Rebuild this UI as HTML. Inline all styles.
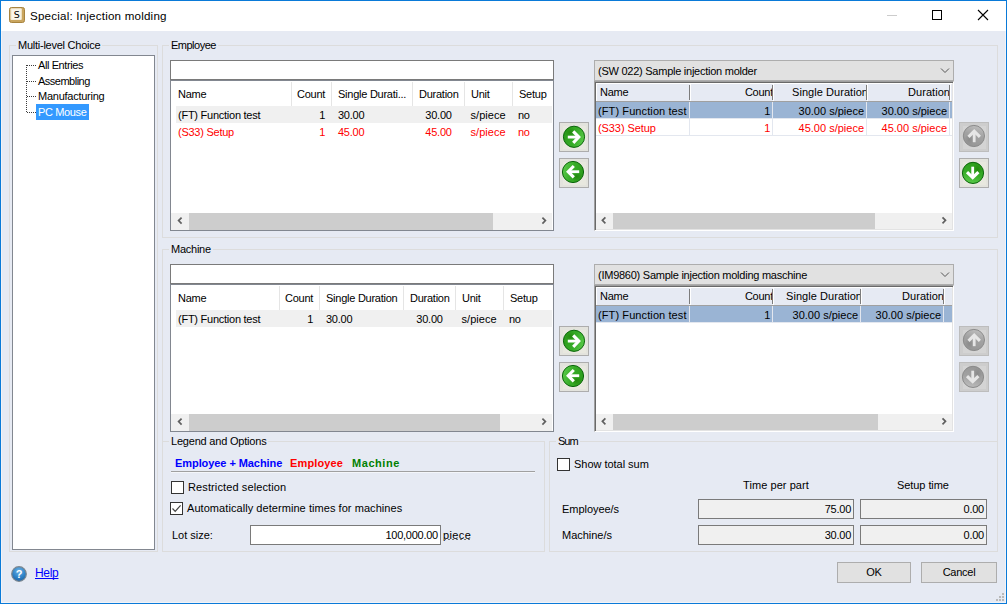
<!DOCTYPE html>
<html>
<head>
<meta charset="utf-8">
<title>Special: Injection molding</title>
<style>
html,body{margin:0;padding:0;}
body{width:1007px;height:604px;position:relative;overflow:hidden;background:#e6eaf3;
  font-family:"Liberation Sans",sans-serif;font-size:11px;color:#000;letter-spacing:-0.25px;}
.a{position:absolute;}
.t{position:absolute;white-space:nowrap;line-height:13px;height:13px;}
.win{left:0;top:0;width:1007px;height:604px;box-sizing:border-box;border:1px solid #0a7ad8;box-shadow:inset 0 0 0 1px #f2f3f7;}
.titlebar{left:1px;top:1px;width:1005px;height:30px;background:#fff;}
.title{left:30px;top:8px;letter-spacing:0.2px;font-size:11.6px;line-height:15px;height:15px;}
.gb{position:absolute;box-sizing:border-box;border:1px solid #dcdcdc;}
.gbl{position:absolute;background:#e6eaf3;padding:0 2px 0 2px;white-space:nowrap;line-height:13px;height:13px;}
.tree{left:12px;top:55px;width:143px;height:495px;box-sizing:border-box;border:1px solid #828790;background:#fff;}
.sel{background:#3399ff;}
.edit{position:absolute;box-sizing:border-box;border:1px solid #7a7a7a;background:#fff;}
.lv{position:absolute;box-sizing:border-box;border:1px solid #828790;background:#fff;overflow:hidden;}
.hsep{position:absolute;width:1px;background:#e5e5e5;}
.rowbg{position:absolute;background:#f0f0f0;}
.red{color:#ff0000;}
.sb{position:absolute;height:17px;background:#f0f0f0;}
.thumb{position:absolute;top:0;height:17px;background:#cdcdcd;}
.btn{position:absolute;box-sizing:border-box;border:1px solid #adadad;background:#e1e1e1;}
.ibtn{position:absolute;box-sizing:border-box;border:1px solid #adadad;background:#e3e3dd;width:30px;height:30px;}
.combo{position:absolute;box-sizing:border-box;border:1px solid #adadad;background:#e1e1e1;}
.grid{position:absolute;box-sizing:border-box;background:#fff;border:1px solid;border-color:#a0a0a0 #fff #fff #a0a0a0;box-shadow:inset 1px 1px 0 #696969,inset -1px -1px 0 #e3e3e3;overflow:hidden;}
.ghead{position:absolute;left:0;top:0;height:18px;background:#e6eaf3;}
.gsep{position:absolute;width:1px;background:#7c7c7c;}
.gsel{position:absolute;background:#9ab4d4;}
.gline{position:absolute;background:#e3e7ef;}
.ro{position:absolute;box-sizing:border-box;border:1px solid #7a7a7a;background:#f0f0f0;}
.cb{position:absolute;box-sizing:border-box;width:13px;height:13px;border:1px solid #333;background:#fff;}
</style>
</head>
<body>
<div class="a win"></div>
<div class="a titlebar"></div>

<!-- app icon -->
<svg class="a" style="left:9px;top:7px" width="16" height="16" viewBox="0 0 16 16">
  <rect x="0.5" y="0.5" width="15" height="15" rx="2" ry="2" fill="#c9a55f" stroke="#a8843f" stroke-width="1"/>
  <rect x="1.5" y="1.2" width="11.3" height="11.8" rx="1" ry="1" fill="#f4ecdb"/>
  <rect x="3" y="2.5" width="8.5" height="9.5" fill="#fbf6ea"/>
  <text x="7.6" y="11" font-family="DejaVu Sans, Liberation Sans, sans-serif" font-size="9.5" text-anchor="middle" fill="#000">S</text>
</svg>
<div class="t title">Special: Injection molding</div>

<!-- window controls -->
<svg class="a" style="left:880px;top:1px" width="126" height="30" viewBox="0 0 126 30">
  <line x1="7" y1="14.5" x2="17" y2="14.5" stroke="#cccccc" stroke-width="1"/>
  <rect x="52.5" y="9.5" width="9" height="9" fill="none" stroke="#000" stroke-width="1"/>
  <path d="M98 9 L108 19 M108 9 L98 19" stroke="#000" stroke-width="1.1" fill="none"/>
</svg>

<!-- Multi-level Choice -->
<div class="gb" style="left:9px;top:45px;width:149px;height:507px"></div>
<div class="gbl" style="left:16px;top:39px">Multi-level Choice</div>
<div class="a tree"></div>
<svg class="a" style="left:20px;top:56px" width="20" height="64" viewBox="0 0 20 64">
  <g stroke="#3c3c3c" stroke-width="1" stroke-dasharray="1 1" fill="none">
    <line x1="6.5" y1="9" x2="6.5" y2="57"/>
    <line x1="7" y1="9.5" x2="16" y2="9.5"/>
    <line x1="7" y1="25.5" x2="16" y2="25.5"/>
    <line x1="7" y1="40.5" x2="16" y2="40.5"/>
    <line x1="7" y1="56.5" x2="16" y2="56.5"/>
  </g>
</svg>
<div class="a sel" style="left:36px;top:104px;width:53px;height:16px"></div>
<div class="t" style="left:38px;top:59px;letter-spacing:-0.4px">All Entries</div>
<div class="t" style="left:38px;top:75px;letter-spacing:-0.5px">Assembling</div>
<div class="t" style="left:38px;top:90px">Manufacturing</div>
<div class="t" style="left:38px;top:106px;color:#fff;letter-spacing:-0.37px">PC Mouse</div>

<!-- group boxes -->
<div class="gb" style="left:162px;top:45px;width:836px;height:193px"></div>
<div class="gbl" style="left:169px;top:39px;letter-spacing:-0.5px">Employee</div>
<div class="gb" style="left:162px;top:249px;width:836px;height:194px;border-bottom:none"></div>
<div class="gbl" style="left:169px;top:243px">Machine</div>
<div class="gb" style="left:162px;top:441px;width:383px;height:111px"></div>
<div class="gbl" style="left:169px;top:435px;letter-spacing:-0.2px">Legend and Options</div>
<div class="gb" style="left:549px;top:441px;width:449px;height:111px"></div>
<div class="gbl" style="left:556px;top:435px;letter-spacing:-1px">Sum</div>

<svg width="0" height="0" style="position:absolute">
  <defs>
    <linearGradient id="gg" x1="0" y1="0.35" x2="1" y2="0.65">
      <stop offset="0" stop-color="#2c9c1b"/><stop offset="0.55" stop-color="#37ac28"/><stop offset="1" stop-color="#5bcb4a"/>
    </linearGradient>
    <radialGradient id="gd" cx="50%" cy="50%" r="50%">
      <stop offset="0" stop-color="#1f8208" stop-opacity="0.75"/><stop offset="1" stop-color="#1f8208" stop-opacity="0"/>
    </radialGradient>
    <linearGradient id="yg" x1="0" y1="0.35" x2="1" y2="0.65">
      <stop offset="0" stop-color="#969696"/><stop offset="0.55" stop-color="#a2a2a2"/><stop offset="1" stop-color="#bdbdbd"/>
    </linearGradient>
    <radialGradient id="yd" cx="50%" cy="50%" r="50%">
      <stop offset="0" stop-color="#808080" stop-opacity="0.6"/><stop offset="1" stop-color="#808080" stop-opacity="0"/>
    </radialGradient>
    <g id="arrow" fill="none">
      <path d="M-6.2 0.3 H3.6" stroke-width="2.8"/>
      <path d="M-0.8 -5.4 L4.8 0.3 L-0.8 6" stroke-width="3.1" stroke-linejoin="miter"/>
    </g>
    <g id="gico">
      <circle r="10.6" fill="url(#gg)" stroke="#0b660b" stroke-width="1"/>
      <ellipse cx="-3.5" cy="-4.5" rx="6" ry="5" fill="url(#gd)"/>
      <use href="#arrow" stroke="#fff"/>
    </g>
    <g id="yico">
      <circle r="10.6" fill="url(#yg)" stroke="#8b8b8b" stroke-width="1"/>
      <ellipse cx="-3.5" cy="-4.5" rx="6" ry="5" fill="url(#yd)"/>
      <use href="#arrow" stroke="#e6e6e6"/>
    </g>
  </defs>
</svg>
<!-- ===== EMPLOYEE left ===== -->
<div class="edit" style="left:170px;top:60px;width:384px;height:20px"></div>
<div class="lv" style="left:170px;top:80px;width:384px;height:151px"></div>
<div class="hsep" style="left:291px;top:82px;height:24px"></div>
<div class="hsep" style="left:331px;top:82px;height:24px"></div>
<div class="hsep" style="left:412px;top:82px;height:24px"></div>
<div class="hsep" style="left:464px;top:82px;height:24px"></div>
<div class="hsep" style="left:512px;top:82px;height:24px"></div>
<div class="rowbg" style="left:176px;top:106px;width:376px;height:17px"></div>
<div class="t" style="left:178px;top:88px">Name</div>
<div class="t" style="left:297px;top:88px">Count</div>
<div class="t" style="left:338px;top:88px">Single Durati...</div>
<div class="t" style="left:419px;top:88px">Duration</div>
<div class="t" style="left:471px;top:88px">Unit</div>
<div class="t" style="left:519px;top:88px">Setup</div>
<div class="t" style="left:178px;top:109px">(FT) Function test</div>
<div class="t" style="left:291px;top:109px;width:34px;text-align:right">1</div>
<div class="t" style="left:338px;top:109px">30.00</div>
<div class="t" style="left:413px;top:109px;width:51px;text-align:center">30.00</div>
<div class="t" style="left:470.5px;top:109px;letter-spacing:0.05px">s/piece</div>
<div class="t" style="left:518px;top:109px">no</div>
<div class="t red" style="left:178px;top:126px">(S33) Setup</div>
<div class="t red" style="left:291px;top:126px;width:34px;text-align:right">1</div>
<div class="t red" style="left:338px;top:126px">45.00</div>
<div class="t red" style="left:413px;top:126px;width:51px;text-align:center">45.00</div>
<div class="t red" style="left:470.5px;top:126px;letter-spacing:0.05px">s/piece</div>
<div class="t red" style="left:518px;top:126px">no</div>
<div class="sb" style="left:171px;top:213px;width:381px"><div class="thumb" style="left:18px;width:304px"></div>
<svg class="a" style="left:0;top:0" width="381" height="17"><path d="M10.6 4.6 L7.6 7.6 L10.6 10.6" fill="none" stroke="#606060" stroke-width="1.7"/><path d="M371.4 4.6 L374.4 7.6 L371.4 10.6" fill="none" stroke="#606060" stroke-width="1.7"/></svg></div>

<!-- arrow buttons -->
<div class="ibtn" style="left:559px;top:122px"><svg class="a" style="left:0;top:0" width="28" height="28" viewBox="0 0 28 28"><rect x="3" y="3" width="23" height="23" fill="#e8e8df"/><use href="#gico" transform="translate(14.0 13.8) rotate(0)"/></svg></div>
<div class="ibtn" style="left:559px;top:158px"><svg class="a" style="left:0;top:0" width="28" height="28" viewBox="0 0 28 28"><rect x="3" y="3" width="23" height="23" fill="#e8e8df"/><use href="#gico" transform="translate(13.0 13.0) rotate(180)"/></svg></div>

<!-- ===== EMPLOYEE right ===== -->
<div class="combo" style="left:594px;top:60px;width:360px;height:21px"></div>
<div class="t" style="left:598px;top:65px">(SW 022) Sample injection molder</div>
<svg class="a" style="left:939px;top:66px" width="12" height="9" viewBox="0 0 12 9"><path d="M2 2.5 L6 6.5 L10 2.5" fill="none" stroke="#555" stroke-width="1"/></svg>
<div class="grid" style="left:594px;top:81px;width:360px;height:150px"></div>
<div class="a" style="left:596px;top:83px;width:356px;height:18px;background:#e6eaf3;border-top:1px solid #fff;border-left:1px solid #fff;box-sizing:border-box"></div>
<div class="gsep" style="left:689px;top:85px;height:15px"></div><div class="a" style="left:690px;top:84px;width:1px;height:17px;background:#fff"></div>
<div class="gsep" style="left:772px;top:85px;height:15px"></div><div class="a" style="left:773px;top:84px;width:1px;height:17px;background:#fff"></div>
<div class="gsep" style="left:866px;top:85px;height:15px"></div><div class="a" style="left:867px;top:84px;width:1px;height:17px;background:#fff"></div>
<div class="gsep" style="left:949px;top:85px;height:15px"></div><div class="a" style="left:950px;top:84px;width:1px;height:17px;background:#fff"></div>
<div class="a" style="left:596px;top:101px;width:356px;height:1px;background:#a0a0a0"></div>
<div class="gsel" style="left:596px;top:102px;width:356px;height:16px"></div>
<div class="a" style="left:689px;top:102px;width:1px;height:34px;background:#e3e7ef"></div>
<div class="a" style="left:772px;top:102px;width:1px;height:34px;background:#e3e7ef"></div>
<div class="a" style="left:866px;top:102px;width:1px;height:34px;background:#e3e7ef"></div>
<div class="a" style="left:949px;top:102px;width:1px;height:34px;background:#e3e7ef"></div>
<div class="gline" style="left:596px;top:118px;width:356px;height:1px"></div>
<div class="gline" style="left:596px;top:135px;width:356px;height:1px"></div>
<div class="t" style="left:600px;top:86px">Name</div>
<div class="t" style="left:690px;top:86px;width:82px;text-align:right;overflow:hidden"><span style="position:relative;left:1px">Count</span></div>
<div class="t" style="left:773px;top:86px;width:93px;text-align:right;overflow:hidden;letter-spacing:0.05px"><span style="position:relative;left:2px">Single Duration</span></div>
<div class="t" style="left:867px;top:86px;width:82px;text-align:right;overflow:hidden;letter-spacing:0.05px"><span style="position:relative;left:1px">Duration</span></div>
<div class="t" style="left:598px;top:105px;letter-spacing:0.1px">(FT) Function test</div>
<div class="t" style="left:690px;top:105px;width:80px;text-align:right">1</div>
<div class="t" style="left:773px;top:105px;width:91px;text-align:right;letter-spacing:0">30.00 s/piece</div>
<div class="t" style="left:867px;top:105px;width:80px;text-align:right;letter-spacing:0">30.00 s/piece</div>
<div class="t red" style="left:598px;top:122px;letter-spacing:-0.09px">(S33) Setup</div>
<div class="t red" style="left:690px;top:122px;width:80px;text-align:right">1</div>
<div class="t red" style="left:773px;top:122px;width:91px;text-align:right;letter-spacing:0">45.00 s/piece</div>
<div class="t red" style="left:867px;top:122px;width:80px;text-align:right;letter-spacing:0">45.00 s/piece</div>
<div class="sb" style="left:596px;top:213px;width:356px;height:16px"><div class="thumb" style="left:17px;width:262px;height:16px"></div>
<svg class="a" style="left:0;top:0" width="356" height="16"><path d="M9.4 4.3 L6.4 7.3 L9.4 10.3" fill="none" stroke="#606060" stroke-width="1.7"/><path d="M346.5 4.3 L349.5 7.3 L346.5 10.3" fill="none" stroke="#606060" stroke-width="1.7"/></svg></div>

<!-- up/down -->
<div class="ibtn" style="left:959px;top:122px;background:#cdcdcd;border-color:#bdbdbd"><svg class="a" style="left:0;top:0" width="28" height="28" viewBox="0 0 28 28"><rect x="3" y="3" width="23" height="23" fill="#d4d4d4"/><use href="#yico" transform="translate(13.9 13.0) rotate(-90)"/></svg></div>
<div class="ibtn" style="left:959px;top:158px"><svg class="a" style="left:0;top:0" width="28" height="28" viewBox="0 0 28 28"><rect x="3" y="3" width="23" height="23" fill="#e8e8df"/><use href="#gico" transform="translate(13.0 13.9) rotate(90)"/></svg></div>

<!-- ===== MACHINE left ===== -->
<div class="edit" style="left:170px;top:264px;width:384px;height:20px"></div>
<div class="lv" style="left:170px;top:284px;width:384px;height:148px"></div>
<div class="hsep" style="left:279px;top:286px;height:24px"></div>
<div class="hsep" style="left:319px;top:286px;height:24px"></div>
<div class="hsep" style="left:403px;top:286px;height:24px"></div>
<div class="hsep" style="left:455px;top:286px;height:24px"></div>
<div class="hsep" style="left:503px;top:286px;height:24px"></div>
<div class="rowbg" style="left:176px;top:310px;width:376px;height:17px"></div>
<div class="t" style="left:178px;top:292px">Name</div>
<div class="t" style="left:285px;top:292px">Count</div>
<div class="t" style="left:326px;top:292px">Single Duration</div>
<div class="t" style="left:410px;top:292px">Duration</div>
<div class="t" style="left:462px;top:292px">Unit</div>
<div class="t" style="left:510px;top:292px">Setup</div>
<div class="t" style="left:178px;top:313px">(FT) Function test</div>
<div class="t" style="left:279px;top:313px;width:34px;text-align:right">1</div>
<div class="t" style="left:326px;top:313px">30.00</div>
<div class="t" style="left:404px;top:313px;width:51px;text-align:center">30.00</div>
<div class="t" style="left:461.5px;top:313px;letter-spacing:0.05px">s/piece</div>
<div class="t" style="left:509px;top:313px">no</div>
<div class="sb" style="left:171px;top:414px;width:381px"><div class="thumb" style="left:18px;width:311px"></div>
<svg class="a" style="left:0;top:0" width="381" height="17"><path d="M10.6 4.6 L7.6 7.6 L10.6 10.6" fill="none" stroke="#606060" stroke-width="1.7"/><path d="M371.4 4.6 L374.4 7.6 L371.4 10.6" fill="none" stroke="#606060" stroke-width="1.7"/></svg></div>

<!-- arrow buttons -->
<div class="ibtn" style="left:559px;top:326px"><svg class="a" style="left:0;top:0" width="28" height="28" viewBox="0 0 28 28"><rect x="3" y="3" width="23" height="23" fill="#e8e8df"/><use href="#gico" transform="translate(14.0 13.8) rotate(0)"/></svg></div>
<div class="ibtn" style="left:559px;top:362px"><svg class="a" style="left:0;top:0" width="28" height="28" viewBox="0 0 28 28"><rect x="3" y="3" width="23" height="23" fill="#e8e8df"/><use href="#gico" transform="translate(13.0 13.0) rotate(180)"/></svg></div>

<!-- ===== MACHINE right ===== -->
<div class="combo" style="left:594px;top:264px;width:360px;height:21px"></div>
<div class="t" style="left:598px;top:269px">(IM9860) Sample injection molding maschine</div>
<svg class="a" style="left:939px;top:270px" width="12" height="9" viewBox="0 0 12 9"><path d="M2 2.5 L6 6.5 L10 2.5" fill="none" stroke="#555" stroke-width="1"/></svg>
<div class="grid" style="left:594px;top:285px;width:360px;height:147px"></div>
<div class="a" style="left:596px;top:287px;width:356px;height:18px;background:#e6eaf3;border-top:1px solid #fff;border-left:1px solid #fff;box-sizing:border-box"></div>
<div class="gsep" style="left:689px;top:289px;height:15px"></div><div class="a" style="left:690px;top:288px;width:1px;height:17px;background:#fff"></div>
<div class="gsep" style="left:772px;top:289px;height:15px"></div><div class="a" style="left:773px;top:288px;width:1px;height:17px;background:#fff"></div>
<div class="gsep" style="left:860px;top:289px;height:15px"></div><div class="a" style="left:861px;top:288px;width:1px;height:17px;background:#fff"></div>
<div class="gsep" style="left:943px;top:289px;height:15px"></div><div class="a" style="left:944px;top:288px;width:1px;height:17px;background:#fff"></div>
<div class="a" style="left:596px;top:305px;width:356px;height:1px;background:#a0a0a0"></div>
<div class="gsel" style="left:596px;top:306px;width:356px;height:16px"></div>
<div class="a" style="left:689px;top:306px;width:1px;height:17px;background:#e3e7ef"></div>
<div class="a" style="left:772px;top:306px;width:1px;height:17px;background:#e3e7ef"></div>
<div class="a" style="left:860px;top:306px;width:1px;height:17px;background:#e3e7ef"></div>
<div class="a" style="left:943px;top:306px;width:1px;height:17px;background:#e3e7ef"></div>
<div class="gline" style="left:596px;top:322px;width:356px;height:1px"></div>
<div class="t" style="left:600px;top:290px">Name</div>
<div class="t" style="left:690px;top:290px;width:82px;text-align:right;overflow:hidden"><span style="position:relative;left:1px">Count</span></div>
<div class="t" style="left:773px;top:290px;width:87px;text-align:right;overflow:hidden;letter-spacing:0.05px"><span style="position:relative;left:2px">Single Duration</span></div>
<div class="t" style="left:861px;top:290px;width:82px;text-align:right;overflow:hidden;letter-spacing:0.05px"><span style="position:relative;left:1px">Duration</span></div>
<div class="t" style="left:598px;top:309px;letter-spacing:0.1px">(FT) Function test</div>
<div class="t" style="left:690px;top:309px;width:80px;text-align:right">1</div>
<div class="t" style="left:773px;top:309px;width:85px;text-align:right;letter-spacing:0">30.00 s/piece</div>
<div class="t" style="left:861px;top:309px;width:80px;text-align:right;letter-spacing:0">30.00 s/piece</div>
<div class="sb" style="left:596px;top:414px;width:356px;height:16px"><div class="thumb" style="left:17px;width:265px;height:16px"></div>
<svg class="a" style="left:0;top:0" width="356" height="16"><path d="M9.4 4.3 L6.4 7.3 L9.4 10.3" fill="none" stroke="#606060" stroke-width="1.7"/><path d="M346.5 4.3 L349.5 7.3 L346.5 10.3" fill="none" stroke="#606060" stroke-width="1.7"/></svg></div>

<!-- up/down (both disabled) -->
<div class="ibtn" style="left:959px;top:326px;background:#cdcdcd;border-color:#bdbdbd"><svg class="a" style="left:0;top:0" width="28" height="28" viewBox="0 0 28 28"><rect x="3" y="3" width="23" height="23" fill="#d4d4d4"/><use href="#yico" transform="translate(13.9 13.0) rotate(-90)"/></svg></div>
<div class="ibtn" style="left:959px;top:362px;background:#cdcdcd;border-color:#bdbdbd"><svg class="a" style="left:0;top:0" width="28" height="28" viewBox="0 0 28 28"><rect x="3" y="3" width="23" height="23" fill="#d4d4d4"/><use href="#yico" transform="translate(13.0 13.9) rotate(90)"/></svg></div>

<!-- ===== LEGEND AND OPTIONS ===== -->
<div class="t" style="left:175px;top:457px;font-weight:bold;color:#0000ff;letter-spacing:-0.07px">Employee + Machine</div>
<div class="t" style="left:290px;top:457px;font-weight:bold;color:#ff0000;letter-spacing:0.14px">Employee</div>
<div class="t" style="left:352px;top:457px;font-weight:bold;color:#008000;letter-spacing:0.56px">Machine</div>
<div class="a" style="left:171px;top:471px;width:364px;height:1px;background:#a0a0a0"></div>
<div class="a" style="left:171px;top:472px;width:364px;height:1px;background:#f4f6fa"></div>
<div class="cb" style="left:171px;top:481px"></div>
<div class="t" style="left:188px;top:481px;letter-spacing:0.115px">Restricted selection</div>
<div class="cb" style="left:170px;top:502px"><svg class="a" style="left:0;top:0" width="11" height="11" viewBox="0 0 11 11"><path d="M1.5 5.5 L4.2 8.3 L9.6 2.4" fill="none" stroke="#444" stroke-width="1.2"/></svg></div>
<div class="t" style="left:187px;top:502px;letter-spacing:0.06px">Automatically determine times for machines</div>
<div class="t" style="left:172px;top:529px;letter-spacing:-0.02px">Lot size:</div>
<div class="edit" style="left:250px;top:525px;width:191px;height:20px"></div>
<div class="t" style="left:251px;top:529px;width:187px;text-align:right">100,000.00</div>
<div class="t" style="left:443px;top:529px;letter-spacing:0.37px">piece</div>
<div class="a" style="left:444px;top:539px;width:28px;height:1px;background:repeating-linear-gradient(90deg,#757575 0,#757575 2px,transparent 2px,transparent 4px)"></div>

<!-- ===== SUM ===== -->
<div class="cb" style="left:557px;top:458px"></div>
<div class="t" style="left:574px;top:458px;letter-spacing:-0.03px">Show total sum</div>
<div class="t" style="left:743px;top:479px;letter-spacing:0.07px">Time per part</div>
<div class="t" style="left:897px;top:479px;letter-spacing:-0.07px">Setup time</div>
<div class="t" style="left:562px;top:503px;letter-spacing:-0.04px">Employee/s</div>
<div class="t" style="left:562px;top:529px;letter-spacing:-0.02px">Machine/s</div>
<div class="ro" style="left:698px;top:499px;width:156px;height:20px"></div>
<div class="ro" style="left:860px;top:499px;width:127px;height:20px"></div>
<div class="ro" style="left:698px;top:525px;width:156px;height:20px"></div>
<div class="ro" style="left:860px;top:525px;width:127px;height:20px"></div>
<div class="t" style="left:700px;top:503px;width:151px;text-align:right">75.00</div>
<div class="t" style="left:862px;top:503px;width:122px;text-align:right">0.00</div>
<div class="t" style="left:700px;top:529px;width:151px;text-align:right">30.00</div>
<div class="t" style="left:862px;top:529px;width:122px;text-align:right">0.00</div>


<!-- ===== FOOTER ===== -->
<svg class="a" style="left:11px;top:566px" width="16" height="16" viewBox="0 0 16 16">
  <defs><radialGradient id="hb" cx="50%" cy="30%" r="70%"><stop offset="0" stop-color="#6fb4e6"/><stop offset="0.6" stop-color="#2f84c9"/><stop offset="1" stop-color="#1d63a6"/></radialGradient></defs>
  <circle cx="8" cy="8" r="7.3" fill="url(#hb)" stroke="#7c8790" stroke-width="1.2"/>
  <text x="8" y="12" font-family="Liberation Sans, sans-serif" font-size="11" font-weight="bold" text-anchor="middle" fill="#fff">?</text>
</svg>
<div class="t" style="left:35px;top:567px;color:#0000ff;text-decoration:underline;text-decoration-skip-ink:none;text-underline-offset:1px;font-size:12px;letter-spacing:-0.3px">Help</div>
<div class="btn" style="left:837px;top:562px;width:74px;height:21px"></div>
<div class="t" style="left:837px;top:566px;width:74px;text-align:center">OK</div>
<div class="btn" style="left:921px;top:562px;width:76px;height:21px"></div>
<div class="t" style="left:921px;top:566px;width:76px;text-align:center">Cancel</div>
<svg class="a" style="left:995px;top:592px" width="10" height="10" viewBox="0 0 10 10" fill="#b9b9b9">
  <rect x="7" y="1" width="2" height="2"/>
  <rect x="4" y="4" width="2" height="2"/><rect x="7" y="4" width="2" height="2"/>
  <rect x="1" y="7" width="2" height="2"/><rect x="4" y="7" width="2" height="2"/><rect x="7" y="7" width="2" height="2"/>
</svg>

</body>
</html>
